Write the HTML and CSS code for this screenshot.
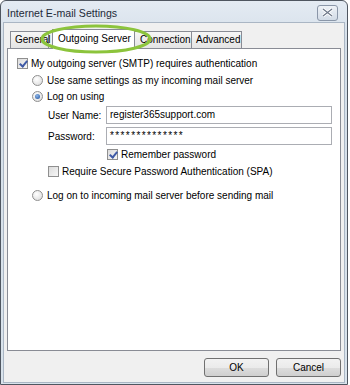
FILE: index.html
```html
<!DOCTYPE html>
<html>
<head>
<meta charset="utf-8">
<link rel="stylesheet" href="styles.css">
</head>
<body>
<div class="window">
  <div class="titlebar">
    <span class="title">Internet E-mail Settings</span>
    <span class="close"><svg width="11" height="9" viewBox="0 0 11 9"><path d="M1 1 L10 8 M10 1 L1 8" stroke="#fff" stroke-width="3"/><path d="M1 1 L10 8 M10 1 L1 8" stroke="#6d7788" stroke-width="1.2"/></svg></span>
  </div>
  <div class="client">
    <div class="tabs">
      <div class="tab tab-general">General</div>
      <div class="tab tab-active">Outgoing Server</div>
      <div class="tab tab-conn">Connection</div>
      <div class="tab tab-adv">Advanced</div>
    </div>
    <div class="panel">
      <label class="row row-top"><span class="cb checked"></span>My outgoing server (SMTP) requires authentication</label>
      <label class="row row-indent"><span class="radio"></span>Use same settings as my incoming mail server</label>
      <label class="row row-indent row-logon"><span class="radio on"></span>Log on using</label>
      <div class="field field-user"><span class="flabel">User Name:</span><span class="input">register365support.com</span></div>
      <div class="field field-pass"><span class="flabel">Password:</span><span class="input pass">**************</span></div>
      <label class="row row-remember"><span class="cb checked"></span>Remember password</label>
      <label class="row row-spa"><span class="cb"></span>Require Secure Password Authentication (SPA)</label>
      <label class="row row-indent row-incoming"><span class="radio"></span>Log on to incoming mail server before sending mail</label>
    </div>
    <div class="buttons">
      <span class="btn">OK</span>
      <span class="btn">Cancel</span>
    </div>
  </div>
  <svg class="ring" width="114" height="32" viewBox="0 0 114 32"><ellipse cx="57" cy="16" rx="54" ry="13" fill="none" stroke="#8cc43c" stroke-width="3.2"/></svg>
</div>
</body>
</html>
```
FILE: styles.css
```css
* { box-sizing: border-box; }
html, body { margin: 0; padding: 0; background: #fff; }
body { font-family: "Liberation Sans", Arial, sans-serif; font-size: 10px; color: #000; white-space: nowrap; }
.window {
  position: relative;
  width: 348px; height: 385px;
  border: 1px solid #4f5660;
  border-radius: 6px 6px 0 0;
  background: linear-gradient(#e4ebf3, #d5dfe9 40px, #d9e3ec);
  display: flex; flex-direction: column;
}
.titlebar {
  height: 21px; flex: none;
  display: flex; align-items: center; justify-content: space-between;
  padding: 0 9px 0 6px;
}
.title { font-size: 10.6px; color: #1e2a38; margin-top: 2px; }
.close {
  width: 21px; height: 16px; margin-top: 2px;
  border: 1px solid #8a96a8; border-radius: 3px;
  background: linear-gradient(#eef2f7, #d2dbe6);
  display: flex; align-items: center; justify-content: center;
}
.client {
  flex: 1;
  margin: 0 2px 1px 2px;
  border: 1px solid #aab6c4;
  background: #f0f0f0;
  padding: 6px 3px 0 3px;
  display: flex; flex-direction: column;
}
.tabs { display: flex; height: 19px; flex: none; align-items: flex-end; padding-left: 3px; position: relative; z-index: 1; }
.tab {
  height: 17px;
  border: 1px solid #898c95; border-bottom: none;
  background: linear-gradient(#f6f6f6, #e4e4e4);
  padding: 0 0 0 4px;
  line-height: 16px;
  margin-right: -1px;
}
.tab-general { width: 39px; }
.tab-active {
  height: 20px; background: #fff; margin: 0 -1px -1px 4px;
  width: 83px; line-height: 18px; padding-left: 5px; position: relative; z-index: 2;
}
.tab-conn { width: 58px; padding-left: 5px; }
.tab-adv { width: 51px; }
.panel {
  background: #fff;
  border: 1px solid #898c95;
  height: 303px; flex: none;
  padding: 8px 0 0 9px;
}
.row { display: flex; align-items: center; height: 13px; }
.row-indent { margin-left: 15px; margin-top: 3px; height: 14px; }
.row-logon { margin-top: 2px; }
.cb {
  width: 11px; height: 11px; flex: none;
  border: 1px solid #8f8f8f;
  background: linear-gradient(135deg, #dcdcdc, #f7f7f7);
  margin-right: 3px; position: relative;
}
.cb.checked::after {
  content: ""; position: absolute; left: 3px; top: 0px;
  width: 3px; height: 6px;
  border: solid #3f5aa6; border-width: 0 2px 2px 0;
  transform: rotate(40deg);
}
.radio {
  width: 11px; height: 11px; flex: none; border-radius: 50%;
  border: 1px solid #8f8f8f;
  background: radial-gradient(circle at 40% 35%, #fff, #d8d8d8);
  margin-right: 4px; position: relative;
}
.radio.on::after {
  content: ""; position: absolute; left: 2px; top: 2px;
  width: 5px; height: 5px; border-radius: 50%;
  background: radial-gradient(circle at 40% 35%, #8fb7e8, #1b4e9c);
}
.field { display: flex; align-items: center; margin-left: 31px; height: 18px; }
.field-user { margin-top: 3px; }
.field-pass { margin-top: 3px; }
.flabel { width: 58px; flex: none; }
.input {
  width: 226px; height: 18px; flex: none;
  border: 1px solid #abadb3;
  padding: 0 3px; line-height: 16px;
}
.pass { letter-spacing: 1.4px; }
.row-remember { margin-left: 90px; margin-top: 3px; }
.row-spa { margin-left: 31px; margin-top: 4px; }
.row-incoming { margin-top: 10px; }
.buttons { display: flex; justify-content: flex-end; gap: 7px; padding-top: 7px; }
.btn {
  width: 65px; height: 19px;
  border: 1px solid #707070; border-radius: 3px;
  background: linear-gradient(#f2f2f2 0, #ebebeb 50%, #dddddd 51%, #cfcfcf 100%);
  display: flex; align-items: center; justify-content: center;
}
.ring { position: absolute; left: 38px; top: 22px; z-index: 5; }
```
